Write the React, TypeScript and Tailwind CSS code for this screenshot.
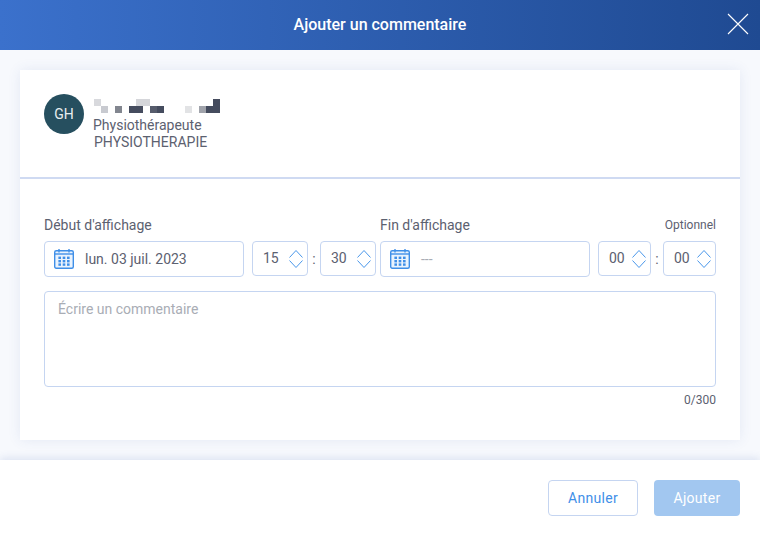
import React from 'react';

const CalendarIcon = () => (
  <svg width="20" height="20" viewBox="0 0 20 20" fill="none" className="shrink-0">
    <rect x="0.7" y="1.7" width="18.6" height="17.6" rx="1.5" fill="#eaf3fd" stroke="#3f8fe8" strokeWidth="1.4" />
    <path d="M0.7 5h18.6" stroke="#3f8fe8" strokeWidth="1.4" />
    <path d="M5 0v3.5M15 0v3.5" stroke="#3f8fe8" strokeWidth="1.4" />
    <g fill="#3f8fe8">
      {[4.4, 8.7, 13].map((x) =>
        [7.6, 11, 14.4].map((y) => <rect key={`${x}-${y}`} x={x} y={y} width="2.6" height="2.4" />)
      )}
    </g>
  </svg>
);

const Spinner = () => (
  <svg width="14" height="20" viewBox="0 0 14 20" fill="none" className="shrink-0">
    <path d="M0.5 8.5 7 1.5 13.5 8.5" stroke="#4a97ea" strokeWidth="1" />
    <path d="M0.5 11.5 7 18.5 13.5 11.5" stroke="#4a97ea" strokeWidth="1" />
  </svg>
);

const blocks = [
  { x: 0, y: 0, w: 7, c: '#d8d9dd' },
  { x: 42, y: 0, w: 14, c: '#d5d6da' },
  { x: 119, y: 0, w: 7, c: '#454c5e' },
  { x: 7, y: 7, w: 7, c: '#c8cad0' },
  { x: 21, y: 7, w: 7, c: '#82868f' },
  { x: 35, y: 7, w: 14, c: '#454c5e' },
  { x: 56, y: 7, w: 7, c: '#565c6c' },
  { x: 63, y: 7, w: 7, c: '#454c5e' },
  { x: 91, y: 7, w: 7, c: '#e2e3e5' },
  { x: 105, y: 7, w: 7, c: '#a0a3ab' },
  { x: 112, y: 7, w: 14, c: '#454c5e' },
];

const TimeBox = ({ value, width }: { value: string; width: string }) => (
  <div className={`${width} h-[35px] flex items-center justify-between pl-[10px] pr-[4px] bg-white border border-[#c5d5f1] rounded-[4px] text-[14px] text-[#5c6170]`}>
    <span>{value}</span>
    <Spinner />
  </div>
);

const Colon = ({ width }: { width: string }) => (
  <span className={`${width} h-[36px] leading-[36px] text-center text-[14px] text-[#5c6170]`}>:</span>
);

export default function App() {
  return (
    <div className="w-[760px] h-[536px] flex flex-col overflow-hidden bg-[#f7f9fd] font-['Roboto',sans-serif] text-[#5c6170] antialiased">
      <header className="relative h-[50px] shrink-0 flex items-center justify-center bg-gradient-to-r from-[#3b71cc] to-[#1f4a92]">
        <h1 className="text-[16px] font-medium text-white">Ajouter un commentaire</h1>
        <svg width="22" height="22" viewBox="0 0 22 22" fill="none" className="absolute right-[11px] top-[13px]">
          <path d="M1 1 21 21M21 1 1 21" stroke="#fff" strokeWidth="1.1" />
        </svg>
      </header>

      <main className="flex-1 pt-[20px] px-[20px]">
        <div className="h-[370px] bg-white shadow-[0_0_12px_rgba(60,90,170,0.1)]">
          <section className="h-[109px] flex items-start pt-[29px] pl-[24px] border-b-2 border-[#cfdaf2]">
            <div className="w-[40px] h-[40px] mt-[-5px] rounded-full bg-[#264f5f] text-[#e8eef0] text-[14px] flex items-center justify-center shrink-0">
              GH
            </div>
            <div className="ml-[9px] text-[14px] leading-[17px]">
              <svg width="126" height="14" viewBox="0 0 126 14" className="block ml-[1px]">
                {blocks.map((b) => (
                  <rect key={`${b.x}-${b.y}`} x={b.x} y={b.y} width={b.w} height="7" fill={b.c} />
                ))}
              </svg>
              <div className="mt-[4px]">Physiothérapeute</div>
              <div className="ml-[1px]">PHYSIOTHERAPIE</div>
            </div>
          </section>

          <section className="px-[24px] pt-[38px]">
            <div className="flex gap-[4px]">
              <div className="w-[332px]">
                <div className="h-[24px] text-[14px] leading-[17px]">Début d'affichage</div>
                <div className="flex items-start">
                  <div className="w-[200px] h-[36px] flex items-center pl-[9px] gap-[11px] border border-[#c5d5f1] rounded-[4px] text-[14px]">
                    <CalendarIcon />
                    <span>lun. 03 juil. 2023</span>
                  </div>
                  <div className="w-[8px]" />
                  <TimeBox value="15" width="w-[56px]" />
                  <Colon width="w-[12px]" />
                  <TimeBox value="30" width="w-[56px]" />
                </div>
              </div>

              <div className="w-[336px]">
                <div className="h-[24px] flex justify-between items-start">
                  <span className="text-[14px] leading-[17px]">Fin d'affichage</span>
                  <span className="text-[12px] leading-[17px]">Optionnel</span>
                </div>
                <div className="flex items-start">
                  <div className="w-[210px] h-[36px] flex items-center pl-[9px] gap-[11px] border border-[#c5d5f1] rounded-[4px] text-[14px] text-[#a9adb5]">
                    <CalendarIcon />
                    <span>---</span>
                  </div>
                  <div className="w-[8px]" />
                  <TimeBox value="00" width="w-[53px]" />
                  <Colon width="w-[12px]" />
                  <TimeBox value="00" width="w-[53px]" />
                </div>
              </div>
            </div>

            <div className="mt-[14px] h-[96px] border border-[#c5d5f1] rounded-[4px] px-[13px] pt-[9px] text-[14px] leading-[17px] text-[#a9adb5]">
              Écrire un commentaire
            </div>
            <div className="mt-[6px] text-right text-[12px] leading-[14px]">0/300</div>
          </section>
        </div>
      </main>

      <footer className="h-[76px] shrink-0 flex items-center justify-end gap-[16px] pr-[20px] bg-white shadow-[0_-2px_8px_rgba(60,90,170,0.14)]">
        <button className="w-[90px] h-[36px] bg-white border border-[#c5d5f1] rounded-[4px] text-[14px] tracking-[0.3px] text-[#3f8fe8]">
          Annuler
        </button>
        <button className="w-[86px] h-[36px] bg-[#a2c7f0] rounded-[4px] text-[14px] tracking-[0.3px] text-white">
          Ajouter
        </button>
      </footer>
    </div>
  );
}
